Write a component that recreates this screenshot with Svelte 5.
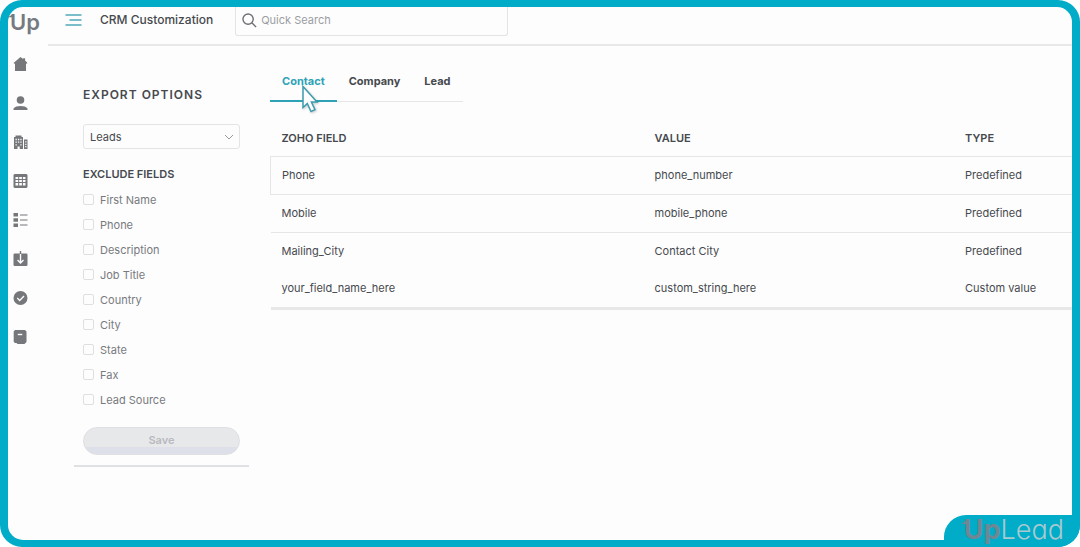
<script>
  let activeTab = "Contact";
  let listType = "Leads";

  const tabs = ["Contact", "Company", "Lead"];

  let excluded = [
    { name: "First Name", checked: false },
    { name: "Phone", checked: false },
    { name: "Description", checked: false },
    { name: "Job Title", checked: false },
    { name: "Country", checked: false },
    { name: "City", checked: false },
    { name: "State", checked: false },
    { name: "Fax", checked: false },
    { name: "Lead Source", checked: false },
  ];

  const rows = [
    { field: "Phone", value: "phone_number", type: "Predefined" },
    { field: "Mobile", value: "mobile_phone", type: "Predefined" },
    { field: "Mailing_City", value: "Contact City", type: "Predefined" },
    {
      field: "your_field_name_here",
      value: "custom_string_here",
      type: "Custom value",
    },
  ];
</script>

<div class="frame">
  <aside class="sidebar">
    <a class="logo" href="#home">
      <svg class="flick" viewBox="0 0 6 6"><path d="M0 4L6 0v4z" /></svg>Up
    </a>
    <nav>
      <a href="#home" aria-label="Home">
        <svg viewBox="0 0 14 14">
          <path d="M7 0l2.600 2V1.200h2v2.400L14 6l-.8.8-.7-.4V14h-11V6.400l-.7.4L0 6z" />
        </svg>
      </a>
      <a href="#contacts" aria-label="Contacts">
        <svg viewBox="0 0 14 14">
          <circle cx="7" cy="4" r="3.8" />
          <path d="M0 14v-1.500C1 10.800 4 10 7 10s6 .8 7 2.500V14z" />
        </svg>
      </a>
      <a href="#companies" aria-label="Companies">
        <svg viewBox="0 0 14 14">
          <path
            fill-rule="evenodd"
            d="M2 .5h6V2h1.500v12H6.200v-2.500H4V14H.5V2H2zM2 3.800v1.400h1.300V3.800zm2.400 0v1.400h1.300V3.800zm2.400 0v1.400h1.300V3.800zM2 6.500v1.300h1.300V6.500zm2.400 0v1.300h1.300V6.500zm2.400 0v1.300h1.300V6.500zM2 9.200v1.200h1.300V9.200zm4.800 0v1.200h1.300V9.200zM10.500 4.500H14V14h-3.500zm1.200 1.800v1.200h1.200V6.300zm0 2.400v1.200h1.200V8.700zm0 2.400v1.200h1.200v-1.200z"
          />
        </svg>
      </a>
      <a href="#table" aria-label="Table">
        <svg viewBox="0 0 14 14">
          <path
            fill-rule="evenodd"
            d="M1 0h12l1 1v12l-1 1H1l-1-1V1zM2 3v2h2.700V3zm3.700 0v2h2.700V3zm3.700 0v2H12V3zM2 6v2h2.700V6zm3.700 0v2h2.700V6zm3.700 0v2H12V6zM2 9v2.500h2.700V9zm3.700 0v2.500h2.700V9zm3.700 0v2.500H12V9z"
          />
        </svg>
      </a>
      <a href="#lists" aria-label="Lists">
        <svg viewBox="0 0 14 14">
          <path
            d="M0 0h4.500v3.600H0zM0 5.200h4.500v3.600H0zM0 10.400h4.500V14H0zM6.500 1.500H14v1H6.500zM6.500 6.500H14v1H6.500zM6.500 11.500H14v1H6.500z"
          />
        </svg>
      </a>
      <a href="#exports" aria-label="Exports">
        <svg viewBox="0 0 14 14">
          <rect y="1.5" width="14" height="12.5" rx="1.2" />
          <path class="cut" d="M7 2v8.500M4 8l3 3 3-3" />
          <path d="M6.300-1h1.400v3H6.300z" />
        </svg>
      </a>
      <a href="#verify" aria-label="Verify">
        <svg viewBox="0 0 14 14">
          <circle cx="7" cy="7" r="7" />
          <path class="cut" d="M3.800 7l2.400 2.400L10.500 5" />
        </svg>
      </a>
      <a href="#docs" aria-label="Docs">
        <svg viewBox="0 0 14 14">
          <path d="M1.500 0h10L13 1.500V12l-2 2H4l-1-1H1.500L.2 11.800V1.500z" />
          <path class="cut" d="M4.300 4.500h4.500" />
        </svg>
      </a>
    </nav>
  </aside>

  <div class="page">
    <header>
      <button class="menu" aria-label="Toggle menu">
        <svg viewBox="0 0 16 12">
          <path d="M0 1h16M4 6h12M0 11h16" />
        </svg>
      </button>
      <h1>CRM Customization</h1>
      <label class="search">
        <svg viewBox="0 0 16 16">
          <circle cx="6.5" cy="6.5" r="5.5" />
          <path d="M10.500 10.500l4.500 4.500" />
        </svg>
        <input type="search" placeholder="Quick Search" aria-label="Quick Search" />
      </label>
    </header>

    <main>
      <form class="options" on:submit|preventDefault>
        <h2>EXPORT OPTIONS</h2>
        <div class="select">
          <select bind:value={listType} aria-label="Export options">
            <option>Leads</option>
            <option>Contacts</option>
          </select>
          <svg viewBox="0 0 10 6"><path d="M1 1l4 4 4-4" /></svg>
        </div>
        <fieldset>
          <legend>EXCLUDE FIELDS</legend>
          {#each excluded as item}
            <label class="check">
              <input type="checkbox" bind:checked={item.checked} />
              {item.name}
            </label>
          {/each}
        </fieldset>
        <button class="save">Save</button>
      </form>

      <section class="mapping">
        <div class="tabs">
          {#each tabs as tab}
            <button
              class:active={tab === activeTab}
              on:click={() => (activeTab = tab)}
            >
              {tab}
              {#if tab === "Contact"}
                <svg class="cursor" viewBox="0 0 18 28">
                  <path d="M2 1.500v21l4.300-4 3.700 8 4-1.800-3.600-7.700H16z" />
                </svg>
              {/if}
            </button>
          {/each}
        </div>

        <table>
          <thead>
            <tr>
              <th class="field">ZOHO FIELD</th>
              <th class="value">VALUE</th>
              <th>TYPE</th>
            </tr>
          </thead>
          <tbody>
            {#each rows as row}
              <tr>
                <td>{row.field}</td>
                <td>{row.value}</td>
                <td>{row.type}</td>
              </tr>
            {/each}
          </tbody>
        </table>
      </section>
    </main>
  </div>

  <div class="brand">
    <svg class="flick" viewBox="0 0 6 6"><path d="M0 4L6 0v4z" /></svg><b>Up</b>Lead
  </div>
</div>

<style>
  :global(body) {
    margin: 0;
    background: #fff;
  }

  .frame {
    position: relative;
    display: flex;
    box-sizing: border-box;
    min-height: 100vh;
    border: 8px solid #00acc8;
    border-width: 7px 8px;
    border-radius: 22px;
    background: #00acc8;
    color: #46494e;
    font-family: Inter, "Liberation Sans", sans-serif;
    font-size: 11px;
    line-height: 16px;
  }

  button,
  input,
  select {
    font: inherit;
    color: inherit;
  }

  h1,
  h2 {
    margin: 0;
  }

  .sidebar {
    width: 40px;
    background: #fdfdfd;
    border-radius: 15px 0 0 15px;
  }

  .logo {
    display: flex;
    position: relative;
    padding-left: 2px;
    color: #777a80;
    font-size: 22px;
    font-weight: 600;
    line-height: 30px;
    text-decoration: none;
  }

  .flick {
    position: absolute;
    top: 7px;
    left: 0;
    width: 5px;
    height: 5px;
    fill: #777a80;
  }

  nav {
    display: flex;
    flex-direction: column;
    gap: 25px;
    padding: 20px 0 0 5px;
  }

  nav a {
    display: flex;
    height: 14px;
  }

  nav svg {
    width: 15px;
    height: 14px;
    fill: #75777b;
    overflow: visible;
  }

  nav .cut {
    fill: none;
    stroke: #fdfdfd;
    stroke-width: 1.4;
  }

  .page {
    flex: 1;
    min-width: 0;
    background: #fdfdfd;
    border-radius: 0 15px 15px 0;
  }

  header {
    display: flex;
    align-items: flex-start;
    padding: 0 0 8px 17px;
    border-bottom: 2px solid #e8e8e8;
  }

  .menu {
    display: flex;
    align-items: center;
    height: 26px;
    padding: 0;
    border: 0;
    background: none;
  }

  .menu svg {
    width: 17px;
    height: 12px;
    fill: none;
    stroke: #4fa9b9;
    stroke-width: 1.5;
  }

  h1 {
    margin: 0 22px 0 18px;
    font-size: 12px;
    font-weight: 500;
    line-height: 26px;
  }

  .search {
    display: flex;
    box-sizing: border-box;
    width: 273px;
    height: 29px;
    padding: 0 6px 2px;
    border: 1px solid #e4e4e4;
    border-top: 0;
    border-radius: 0 0 3px 3px;
    align-items: center;
    gap: 4px;
  }

  .search svg {
    width: 15px;
    height: 15px;
    fill: none;
    stroke: #6d7075;
    stroke-width: 1.5;
  }

  .search input {
    flex: 1;
    min-width: 0;
    padding: 0;
    border: 0;
    outline: 0;
    background: none;
  }

  .search input::placeholder {
    color: #9c9ea2;
    opacity: 1;
  }

  main {
    display: flex;
    align-items: flex-start;
    gap: 21px;
    padding: 24px 0 0 26px;
  }

  .options {
    display: flex;
    flex-direction: column;
    box-sizing: border-box;
    width: 175px;
    padding: 16px 9px 10px;
    border-bottom: 2px solid #dfe1e4;
  }

  h2 {
    font-size: 12px;
    font-weight: 600;
    line-height: 18px;
    letter-spacing: 1px;
  }

  .select {
    position: relative;
    margin: 20px 0 16px;
  }

  .select select {
    display: block;
    width: 100%;
    height: 25px;
    padding: 0 6px;
    border: 1px solid #e4e4e4;
    border-radius: 3px;
    background: #fdfdfd;
    appearance: none;
  }

  .select svg {
    position: absolute;
    top: 10px;
    right: 6px;
    width: 10px;
    height: 6px;
    fill: none;
    stroke: #96999d;
    pointer-events: none;
  }

  fieldset {
    display: flex;
    flex-direction: column;
    margin: 0;
    padding: 4px 0 0;
    border: 0;
  }

  legend {
    padding: 0;
    font-weight: 600;
    line-height: 18px;
  }

  .check {
    display: flex;
    align-items: center;
    gap: 6px;
    height: 25px;
    color: #787a7e;
  }

  .check input {
    box-sizing: border-box;
    width: 11px;
    height: 11px;
    margin: 0;
    border: 1px solid #dfdfdf;
    border-radius: 2px;
    appearance: none;
  }

  .check input:checked {
    background: #00acc8;
  }

  .save {
    height: 28px;
    margin-top: 15px;
    padding: 0 0 2px;
    border: 1px solid #dfe0e3;
    border-radius: 14px;
    background: linear-gradient(#e7e8ea 72%, #dde0e8 72%);
    color: #b8babf;
    font-weight: 600;
  }

  .mapping {
    flex: 1;
    min-width: 0;
  }

  .tabs {
    display: inline-flex;
    border-bottom: 1px solid #e6e6e6;
  }

  .tabs button {
    position: relative;
    height: 32px;
    margin-bottom: -1px;
    padding: 0 12px 9px;
    border: 0;
    border-bottom: 2px solid transparent;
    background: none;
    font-weight: 700;
  }

  .tabs .active {
    border-color: #2ea3b7;
    color: #2ea3b7;
  }

  .cursor {
    position: absolute;
    top: 15px;
    left: 31px;
    z-index: 1;
    width: 18px;
    height: 28px;
    fill: #fdfdfd;
    stroke: #3c9bae;
    stroke-width: 1.5;
    filter: drop-shadow(1px 1px 1px #0003);
  }

  table {
    width: 100%;
    margin-top: 19px;
    border-collapse: collapse;
    border-bottom: 3px solid #e8e8e8;
    table-layout: fixed;
  }

  th,
  td {
    height: 35px;
    padding: 0 11px 2px;
    text-align: left;
  }

  th {
    height: 33px;
    font-weight: 600;
  }

  tbody tr:nth-child(-n + 3) {
    border-top: 1px solid #e6e6e6;
  }

  tbody tr:first-child {
    border-left: 1px solid #e6e6e6;
  }

  .field {
    width: 43.8%;
  }

  .value {
    width: 36%;
  }

  .brand {
    position: absolute;
    right: -8px;
    bottom: -7px;
    padding: 0 16px 2px 20px;
    border-radius: 22px 0 22px 0;
    background: #00acc8;
    color: #a9c9d0;
    font-feature-settings: "cv11";
    font-size: 27px;
    font-weight: 300;
    line-height: 30px;
  }

  .brand b {
    color: #6f8792;
    font-weight: 700;
  }

  .brand .flick {
    top: 5px;
    left: 17px;
    width: 6px;
    height: 6px;
    fill: #6f8792;
  }
</style>
